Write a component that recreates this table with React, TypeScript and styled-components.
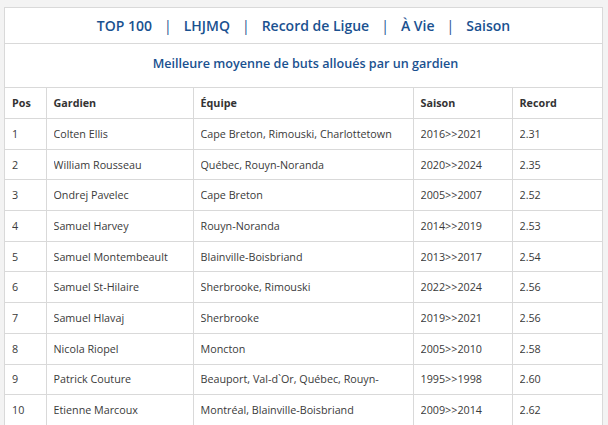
import React from 'react';
import styled, { createGlobalStyle } from 'styled-components';

interface RecordRow {
    pos: number;
    name: string;
    team: string;
    season: string;
    record: string;
}

const rows: RecordRow[] = [
    { pos: 1, name: 'Colten Ellis', team: 'Cape Breton, Rimouski, Charlottetown', season: '2016>>2021', record: '2.31' },
    { pos: 2, name: 'William Rousseau', team: 'Québec, Rouyn-Noranda', season: '2020>>2024', record: '2.35' },
    { pos: 3, name: 'Ondrej Pavelec', team: 'Cape Breton', season: '2005>>2007', record: '2.52' },
    { pos: 4, name: 'Samuel Harvey', team: 'Rouyn-Noranda', season: '2014>>2019', record: '2.53' },
    { pos: 5, name: 'Samuel Montembeault', team: 'Blainville-Boisbriand', season: '2013>>2017', record: '2.54' },
    { pos: 6, name: 'Samuel St-Hilaire', team: 'Sherbrooke, Rimouski', season: '2022>>2024', record: '2.56' },
    { pos: 7, name: 'Samuel Hlavaj', team: 'Sherbrooke', season: '2019>>2021', record: '2.56' },
    { pos: 8, name: 'Nicola Riopel', team: 'Moncton', season: '2005>>2010', record: '2.58' },
    { pos: 9, name: 'Patrick Couture', team: 'Beauport, Val-d`Or, Québec, Rouyn-Noranda', season: '1995>>1998', record: '2.60' },
    { pos: 10, name: 'Etienne Marcoux', team: 'Montréal, Blainville-Boisbriand', season: '2009>>2014', record: '2.62' },
];

const navLinks = ['TOP 100', 'LHJMQ', 'Record de Ligue', 'À Vie', 'Saison'];

const App = () => {
    return (
        <>
            <GlobalStyle />
            <Panel>
                <Nav>
                    {navLinks.map((link, i) => (
                        <React.Fragment key={link}>
                            {i > 0 && <Sep>|</Sep>}
                            <NavLink>{link}</NavLink>
                        </React.Fragment>
                    ))}
                </Nav>
                <Subtitle>Meilleure moyenne de buts alloués par un gardien</Subtitle>
                <Table>
                    <colgroup>
                        <col style={{ width: 41 }} />
                        <col style={{ width: 147 }} />
                        <col style={{ width: 220 }} />
                        <col style={{ width: 99 }} />
                        <col />
                    </colgroup>
                    <thead>
                        <tr>
                            <Th>Pos</Th>
                            <Th>Gardien</Th>
                            <Th>Équipe</Th>
                            <Th>Saison</Th>
                            <Th>Record</Th>
                        </tr>
                    </thead>
                    <tbody>
                        {rows.map(({ pos, name, team, season, record }) => (
                            <tr key={pos}>
                                <Td><Line>{pos}</Line></Td>
                                <Td><Line>{name}</Line></Td>
                                <Td><Line>{team}</Line></Td>
                                <Td><Line>{season}</Line></Td>
                                <Td><Line>{record}</Line></Td>
                            </tr>
                        ))}
                    </tbody>
                </Table>
            </Panel>
        </>
    );
};

const GlobalStyle = createGlobalStyle`
    html, body {
        margin: 0;
        background: #f3f3f3;
        font-family: 'Open Sans', 'Liberation Sans', sans-serif;
    }
    body {
        padding: 7px 4px 0 4px;
        overflow: hidden;
    }
`;

const Panel = styled.div`
    background: #fff;
    border: 1px solid #d9d9d9;
    border-bottom: none;
    width: 599px;
    box-sizing: border-box;
`;

const Nav = styled.div`
    height: 35px;
    display: flex;
    align-items: center;
    justify-content: center;
    gap: 12px;
    border-bottom: 1px solid #d9d9d9;
    color: #1a5190;
    font-size: 14px;
    font-weight: 600;
`;

const NavLink = styled.span``;

const Sep = styled.span`
    font-weight: 400;
`;

const Subtitle = styled.div`
    height: 44px;
    display: flex;
    align-items: center;
    justify-content: center;
    color: #1a5190;
    font-size: 12.6px;
    font-weight: 600;
    border-bottom: 1px solid #d9d9d9;
    padding: 0 0 4px 4px;
    box-sizing: border-box;
`;

const Table = styled.table`
    width: 100%;
    border-collapse: collapse;
    table-layout: fixed;
    font-size: 10.75px;
    color: #3a3a3a;
`;

const Th = styled.th`
    height: 30px;
    padding: 0 7px;
    text-align: left;
    font-weight: 700;
    color: #333;
    border-right: 1px solid #d9d9d9;
    border-bottom: 1px solid #d9d9d9;
    &:last-child {
        border-right: none;
    }
`;

const Td = styled.td`
    height: 29.7px;
    padding: 0 7px;
    text-align: left;
    border-right: 1px solid #d9d9d9;
    border-bottom: 1px solid #d9d9d9;
    &:last-child {
        border-right: none;
    }
`;

const Line = styled.div`
    height: 16px;
    line-height: 16px;
    overflow: hidden;
`;

export default App;
